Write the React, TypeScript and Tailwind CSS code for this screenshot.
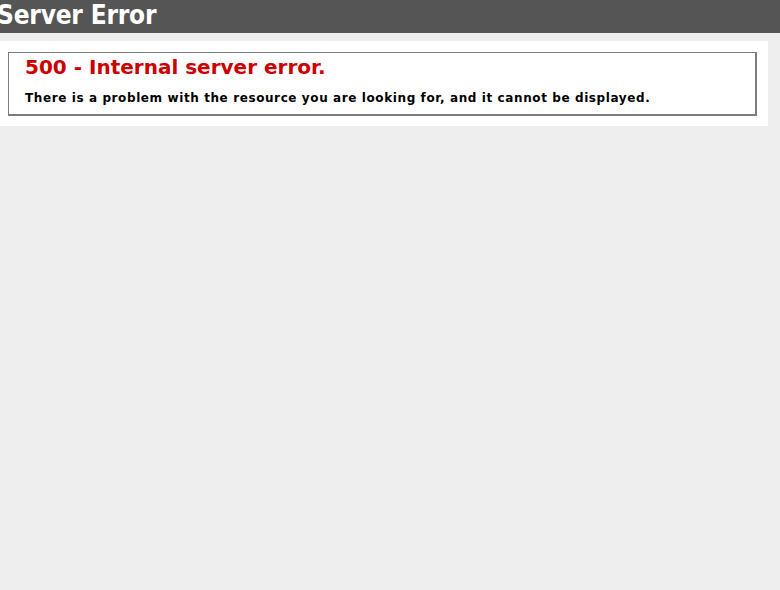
export default function App() {
  return (
    <div className="min-h-[590px] w-full bg-[#eeeeee] font-['DejaVu_Sans',Verdana,sans-serif]">
      {/* Header */}
      <div className="h-[33px] overflow-hidden bg-[#555555]">
        <h1 className="-ml-[3px] mt-[1px] text-[26px] font-bold leading-[28px] tracking-[-0.2px] text-white font-['DejaVu_Sans_Condensed','DejaVu_Sans',sans-serif]">
          Server Error
        </h1>
      </div>

      {/* Content */}
      <div className="mt-[8px] w-[768px] bg-white pl-[8px] pt-[11px] pb-[10px]">
        <fieldset className="h-[64px] w-[749px] border-t border-l border-r-2 border-b-2 border-[#7c7c7c] px-[16px]">
          <h2 className="mt-[2px] text-[20px] font-bold leading-[24px] text-[#cc0000]">
            500 - Internal server error.
          </h2>
          <h3 className="mt-[11px] text-[12px] font-bold leading-[16px] tracking-[0.6px] text-black">
            There is a problem with the resource you are looking for, and it cannot be displayed.
          </h3>
        </fieldset>
      </div>
    </div>
  );
}
